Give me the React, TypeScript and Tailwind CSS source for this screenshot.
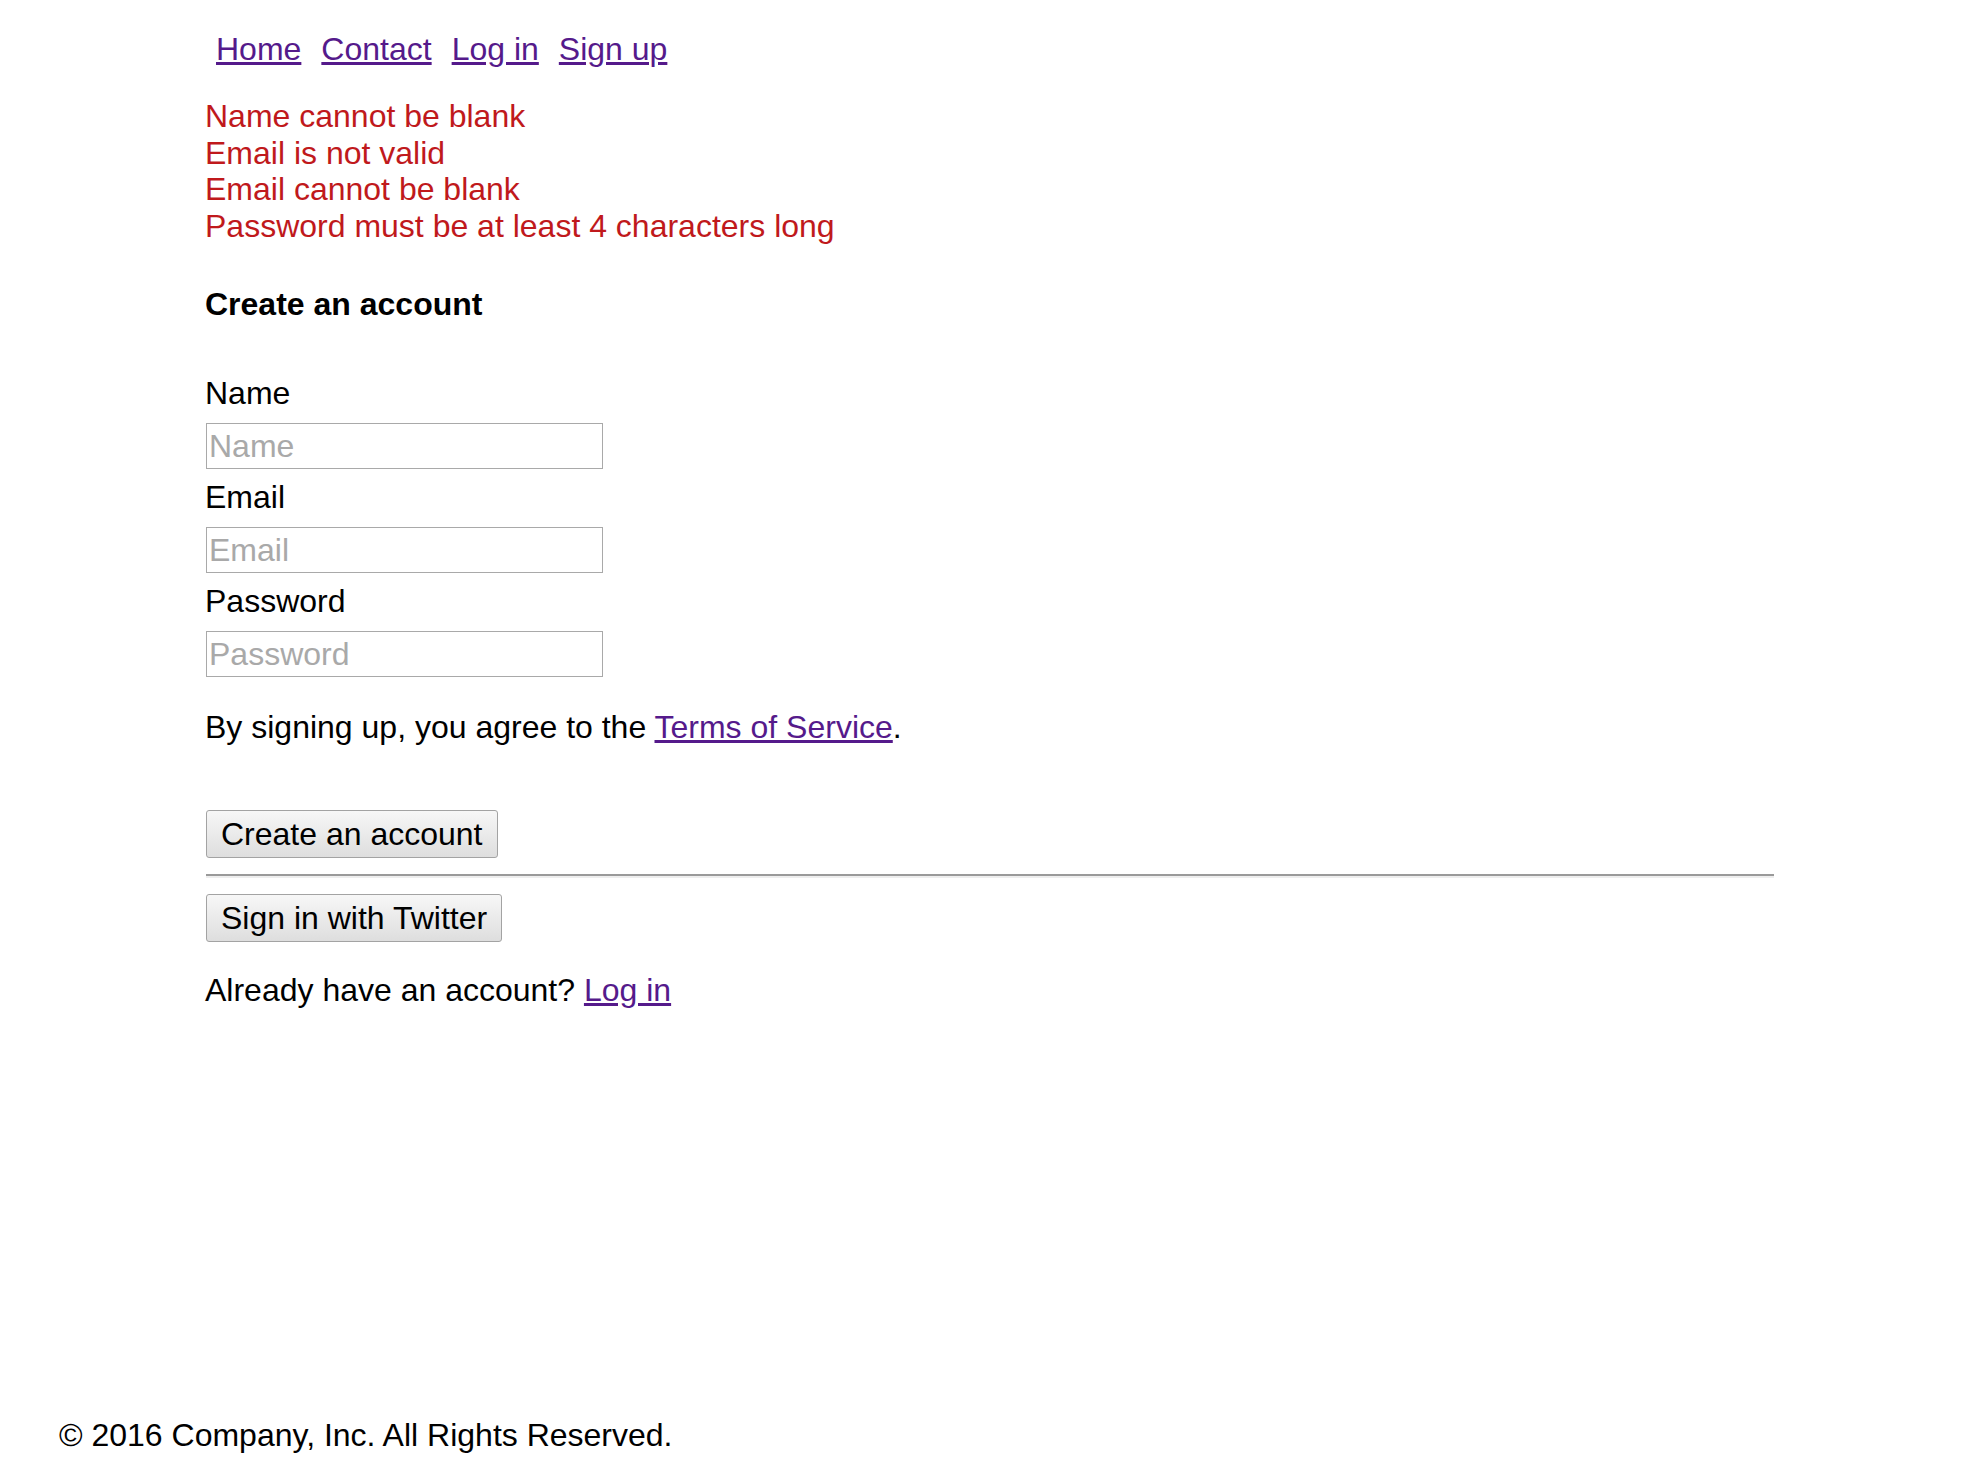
const errors = [
  "Name cannot be blank",
  "Email is not valid",
  "Email cannot be blank",
  "Password must be at least 4 characters long",
];

const navLinks = ["Home", "Contact", "Log in", "Sign up"];

const fields = [
  { label: "Name", type: "text" },
  { label: "Email", type: "email" },
  { label: "Password", type: "password" },
];

function Button({ children }: { children: React.ReactNode }) {
  return (
    <button
      type="button"
      className="ml-[1px] self-start rounded-[3px] border border-[#a3a3a3] bg-gradient-to-b from-[#f7f7f7] to-[#dedede] px-[14px] py-[4.5px] text-[32px] leading-[normal] text-black"
    >
      {children}
    </button>
  );
}

export default function App() {
  return (
    <div className="flex min-h-screen flex-col bg-white font-['Liberation_Sans',Arial,sans-serif] text-[32px] leading-[normal] text-black">
      <div className="flex flex-col pl-[205px] pr-[204px]">
        {/* Nav */}
        <nav className="ml-[11px] mt-[31px] flex gap-[20px]">
          {navLinks.map((link) => (
            <a key={link} href="#" className="text-[#551a8b] underline">
              {link}
            </a>
          ))}
        </nav>

        {/* Errors */}
        <div className="mt-[30px] flex flex-col leading-[36.6px] text-[#c0191c]">
          {errors.map((e) => (
            <div key={e}>{e}</div>
          ))}
        </div>

        <h3 className="mt-[42px] font-bold">Create an account</h3>

        {/* Form */}
        <form className="mt-[52px] flex flex-col">
          {fields.map((f, i) => (
            <div key={f.label} className={i === 0 ? "flex flex-col" : "mt-[10px] flex flex-col"}>
              <label>{f.label}</label>
              <input
                type={f.type}
                placeholder={f.label}
                className="ml-[1px] mt-[11px] h-[46px] w-[397px] border border-[#a9a9a9] px-[2px] text-[32px] outline-none placeholder:text-[#a9a9a9]"
              />
            </div>
          ))}

          <p className="mt-[32px]">
            By signing up, you agree to the{" "}
            <a href="#" className="text-[#551a8b] underline">
              Terms of Service
            </a>
            .
          </p>

          <div className="mt-[64px] flex flex-col">
            <Button>Create an account</Button>
          </div>
        </form>

        <hr className="ml-[1px] mt-[16px] border-t-2 border-b-2 border-t-[#9a9a9a] border-b-[#eeeeee]" />

        <div className="mt-[16px] flex flex-col">
          <Button>Sign in with Twitter</Button>
        </div>

        <p className="mt-[30px]">
          Already have an account?{" "}
          <a href="#" className="text-[#551a8b] underline">
            Log in
          </a>
        </p>
      </div>

      {/* Footer */}
      <footer className="mt-auto pb-[20px] pl-[59px]">© 2016 Company, Inc. All Rights Reserved.</footer>
    </div>
  );
}
